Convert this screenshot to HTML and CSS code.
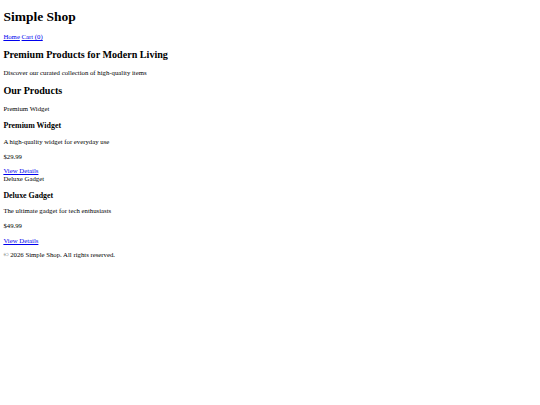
FILE: index.html
```html
<!DOCTYPE html>
<html>
<head>
<meta charset="utf-8">
<title>Simple Shop</title>
<link rel="stylesheet" href="styles.css">
</head>
<body class="page">
<header>
<h1 class="title">Simple Shop</h1>
<nav class="nav"><a href="#">Home</a> <a href="#">Cart (0)</a></nav>
</header>
<main>
<section class="hero">
<h2 class="h2">Premium Products for Modern Living</h2>
<p class="para">Discover our curated collection of high-quality items</p>
</section>
<section class="products">
<h2 class="h2">Our Products</h2>
<div class="card">
<span class="img-alt">Premium Widget</span>
<h3 class="h3">Premium Widget</h3>
<p class="para">A high-quality widget for everyday use</p>
<p class="para">$29.99</p>
<a href="#">View Details</a>
</div>
<div class="card">
<span class="img-alt">Deluxe Gadget</span>
<h3 class="h3">Deluxe Gadget</h3>
<p class="para">The ultimate gadget for tech enthusiasts</p>
<p class="para">$49.99</p>
<a href="#">View Details</a>
</div>
</section>
</main>
<footer>
<p class="para">&copy; 2026 Simple Shop. All rights reserved.</p>
</footer>
</body>
</html>
```
FILE: styles.css
```css
html {
  background: #fff;
}
.page {
  margin: 3.375px;
  font-family: "Liberation Serif", "Times New Roman", serif;
  font-size: 6.75px;
  line-height: 7.76px;
  color: #000;
}
.title {
  font-size: 13.5px;
  line-height: 15.5px;
  margin: 5.8px 0 8.4px;
}
.nav {
  line-height: 7.76px;
}
.h2 {
  font-size: 10.125px;
  line-height: 11.64px;
  margin: 8.4px 0;
}
.h3 {
  font-size: 7.9px;
  line-height: 9.08px;
  margin: 7.9px 0;
}
.para {
  margin: 6.75px 0;
}
a {
  color: #0000ee;
}
```
